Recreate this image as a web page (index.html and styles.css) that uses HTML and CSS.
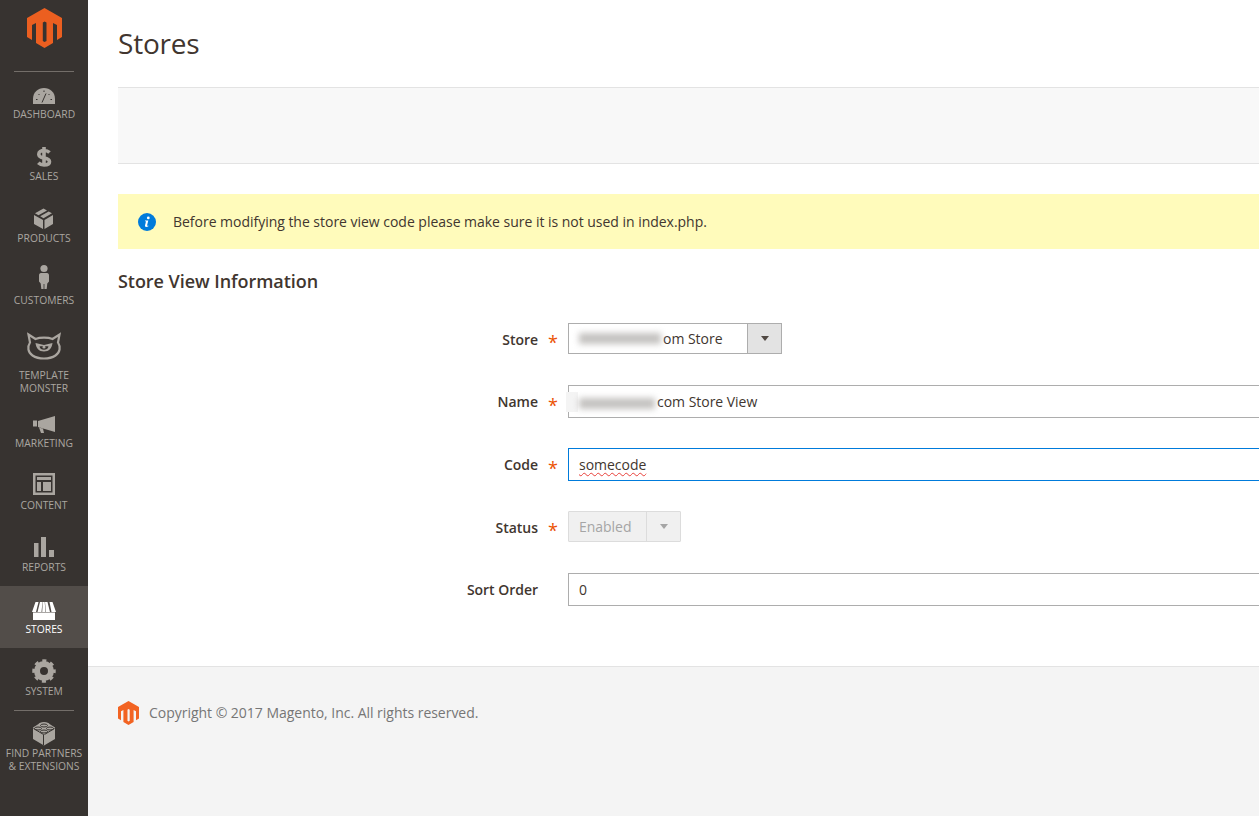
FILE: index.html
```html
<!DOCTYPE html>
<html lang="en">
<head>
<meta charset="utf-8">
<title>Stores</title>
<link rel="stylesheet" href="styles.css">
</head>
<body>
<div class="app">
  <nav class="side">
    <div class="side-logo">
      <svg class="logo-big" viewBox="27 8 35 40"><path fill-rule="evenodd" d="M44.5 8L62 18V37L57 40V25L53 23V43L44.5 48L36 43V23L32 25V40L27 37V18ZM42.800 22.500V41L44.500 42L46.500 41V22.500L44.600 21.500Z"/></svg>
    </div>
    <div class="side-rule"></div>
    <ul class="side-list">
      <li class="side-item">
        <svg class="ico" viewBox="0 0 36 26"><path d="M7 22V17C7 10 12 6 18 6C24 6 29 10 29 17V22Z"/><path class="cut" d="M16 20.5L20 11.5M10 17.5h1.500M12.500 12l1 1M18 8.500v1.500M23.500 12l-1 1M24.500 17.500h1.500"/></svg>
        <span class="side-label">Dashboard</span>
      </li>
      <li class="side-item">
        <svg class="ico" viewBox="0 0 36 26"><path class="line" d="M18 3V22M23.5 8.5C22 7 20 6.5 18 6.5C15 6.5 12.8 8 12.8 10.2C12.8 13 15.5 13.5 18 14C20.8 14.5 23.5 15.2 23.5 17.8C23.5 20 21 21 18 21C15.8 21 13.8 20.3 12.3 18.8"/></svg>
        <span class="side-label">Sales</span>
      </li>
      <li class="side-item">
        <svg class="ico" viewBox="0 0 36 26"><path d="M8 9L17 14V23L8 18ZM18.5 14L27 9V18L18.5 23ZM17.5 2.5L21 4.5L12.5 9.3L9 7.3ZM22.7 5.4L26 7.3L17.5 12.2L14.2 10.3Z"/></svg>
        <span class="side-label">Products</span>
      </li>
      <li class="side-item">
        <svg class="ico" viewBox="0 0 36 26"><circle cx="18" cy="0.5" r="3.6"/><path d="M15 5H21C22.3 5 23 6 23 7.5L23 13.5L21.3 15.5L20.7 21H18.4V16H17.6V21H15.3L14.7 15.5L13 13.5L13 7.5C13 6 13.7 5 15 5Z"/></svg>
        <span class="side-label">Customers</span>
      </li>
      <li class="side-item side-item-tall">
        <svg class="ico ico-tall" viewBox="0 0 36 39"><path class="outline" d="M2.500 4.500L9.500 9C14 7.200 22 7.200 26.500 9L33.500 4.500L32 12.500C35 17 34 22.500 29.500 25.500C26 27.800 22 28.500 18 28.500S10 27.800 6.500 25.500C2 22.500 1 17 4 12.500Z"/><path d="M9.500 13L18 15L26.500 13C26 18 23 21.500 18 21.500S10 18 9.500 13Z"/><path class="cut-fill" d="M13.500 16.500C15 15.800 21 15.800 22.500 16.500C22 18.800 20.300 19.800 18 19.800S14 18.800 13.500 16.500Z"/><circle cx="18" cy="17" r="1.600"/></svg>
        <span class="side-label">Template<br>Monster</span>
      </li>
      <li class="side-item">
        <svg class="ico" viewBox="0 0 36 26"><path d="M29 5V21L12 16V10ZM7 9.500H11V15.500H7ZM13 16.500L17 17.800L18 22H15Z"/></svg>
        <span class="side-label">Marketing</span>
      </li>
      <li class="side-item">
        <svg class="ico" viewBox="0 0 36 26"><path fill-rule="evenodd" d="M7 0H29V22H7ZM9.500 2.500V19.500H26.500V2.500ZM11 4H25V7H11ZM11 9H15V18H11ZM17 9H25V18H17Z"/></svg>
        <span class="side-label">Content</span>
      </li>
      <li class="side-item">
        <svg class="ico" viewBox="0 0 36 26"><path d="M8 8H12.500V22H8ZM15 2H20V22H15ZM23 15H28V22H23Z"/></svg>
        <span class="side-label">Reports</span>
      </li>
      <li class="side-item side-item-on">
        <svg class="ico" viewBox="0 0 36 26"><path d="M9.500 5H12.500L10 15H6ZM14 5H16.500L15.500 15H11.500ZM19 5H21.500L24 15H20ZM23.500 5H26.500L30 15H25.500ZM16.800 5H18.700L19.500 15H16.200ZM7 15.500H29V23H7Z"/></svg>
        <span class="side-label">Stores</span>
      </li>
      <li class="side-item">
        <svg class="ico" viewBox="0 0 36 26"><circle class="gear-ring" cx="18" cy="12" r="7"/><circle class="gear-teeth" cx="18" cy="12" r="10" stroke-dashoffset="2"/></svg>
        <span class="side-label">System</span>
      </li>
    </ul>
    <div class="side-rule"></div>
    <div class="side-item side-item-last">
      <svg class="ico ico-last" viewBox="0 0 36 25"><path d="M18 0C21 0 23 1 23.500 2L29 5.500V17L18 23.500L7 17V5.500L12.500 2C13 1 15 0 18 0Z"/><path class="cut" d="M7.500 6.500L17.500 12.500V23M28.500 6.500L18.500 12.500"/><ellipse class="cut" cx="18" cy="3.500" rx="3.500" ry="1.500"/><ellipse class="cut" cx="12" cy="6.500" rx="3.500" ry="1.500"/><ellipse class="cut" cx="24" cy="6.500" rx="3.500" ry="1.500"/><ellipse class="cut" cx="18" cy="9.500" rx="3.500" ry="1.500"/></svg>
      <span class="side-label">Find Partners<br>&amp; Extensions</span>
    </div>
  </nav>

  <div class="main">
    <header class="page-head"><h1 class="page-title">Stores</h1></header>
    <div class="actions-bar"></div>
    <div class="notice">
      <svg class="notice-ico" viewBox="0 0 18 18"><circle cx="9" cy="9" r="9" fill="#007bdb"/><circle cx="10.300" cy="4.900" r="1.400" fill="#fff"/><path d="M7 7.600H10.300L9.100 12.300C9 12.800 9.300 13 10.300 12.500L10.400 13.200C9 14.100 6.700 14.500 7 12.600L7.900 8.700C8 8.200 7.600 8.200 6.900 8.300Z" fill="#fff"/></svg>
      <span>Before modifying the store view code please make sure it is not used in index.php.</span>
    </div>
    <h2 class="section-title">Store View Information</h2>
    <form class="form">
      <div class="row row-select">
        <label class="row-label">Store</label><span class="star">*</span>
        <div class="select">
          <div class="select-text"><span class="smudge smudge-store"></span>om Store</div>
          <div class="select-btn"><i class="arrow"></i></div>
        </div>
      </div>
      <div class="row">
        <label class="row-label">Name</label><span class="star">*</span>
        <div class="field">
          <span class="patch"></span>
          <span class="smudge smudge-name"></span>com Store View
        </div>
      </div>
      <div class="row">
        <label class="row-label">Code</label><span class="star">*</span>
        <div class="field field-focus"><span class="spell">somecode</span></div>
      </div>
      <div class="row row-select">
        <label class="row-label">Status</label><span class="star">*</span>
        <div class="select select-off">
          <div class="select-text">Enabled</div>
          <div class="select-btn"><i class="arrow"></i></div>
        </div>
      </div>
      <div class="row">
        <label class="row-label">Sort Order</label><span class="star star-none"></span>
        <div class="field">0</div>
      </div>
    </form>
    <footer class="foot">
      <svg class="logo-small" viewBox="27 8 35 40"><path fill-rule="evenodd" d="M44.5 8L62 18V37L57 40V25L53 23V43L44.5 48L36 43V23L32 25V40L27 37V18ZM42.800 22.500V41L44.500 42L46.500 41V22.500L44.600 21.500Z"/></svg>
      <span>Copyright © 2017 Magento, Inc. All rights reserved.</span>
    </footer>
  </div>
</div>
</body>
</html>
```

FILE: styles.css
```css
* { box-sizing: border-box; }
html, body { margin: 0; height: 100%; overflow: hidden; }
body { font-family: "Open Sans", "Liberation Sans", sans-serif; font-size: 14px; letter-spacing: -0.025px; color: #41362f; background: #fff; }

.app { display: flex; width: 1259px; height: 816px; overflow: hidden; }

/* sidebar */
.side { flex: 0 0 88px; width: 88px; background: #373330; color: #aaa6a0; display: flex; flex-direction: column; }
.side-logo { height: 71px; display: flex; justify-content: center; padding-top: 8px; }
.logo-big { width: 35px; height: 40px; fill: #eb5f20; }
.side-rule { height: 1px; margin: 0 14px; background: #736e69; flex: none; }
.side-list { list-style: none; margin: -1px 0 0; padding: 0; }
.side-item { height: 62px; padding-top: 11px; display: flex; flex-direction: column; align-items: center; }
.side-item-tall { height: 81px; }
.side-item-last { height: auto; padding-top: 11px; }
.side-item-on { background: #524d49; color: #fff; }
.ico { width: 36px; height: 26px; flex: none; overflow: visible; fill: currentColor; }
.ico-tall { height: 39px; }
.ico-last { height: 25px; }
.ico .cut { fill: none; stroke: #373330; stroke-width: 1; }
.ico .cut-fill { fill: #373330; }
.ico .line { fill: none; stroke: currentColor; stroke-width: 3.6; }
.ico .outline { fill: none; stroke: currentColor; stroke-width: 2.2; }
.gear-ring { fill: none; stroke: currentColor; stroke-width: 6; }
.gear-teeth { fill: none; stroke: currentColor; stroke-width: 3.500; stroke-dasharray: 3.930 3.930; }
.side-label { font-size: 10.300px; letter-spacing: 0; line-height: 13px; text-transform: uppercase; text-align: center; white-space: nowrap; }

/* page */
.main { flex: 1 1 auto; min-width: 0; overflow: hidden; display: flex; flex-direction: column; background: #fff; }
.page-head { height: 87px; padding: 0 0 2px 30px; display: flex; align-items: center; }
.page-title { margin: 0; font-size: 28px; font-weight: 400; letter-spacing: -0.2px; line-height: 1; }
.actions-bar { height: 77px; background: #f8f8f8; border-top: 1px solid #e3e3e3; border-bottom: 1px solid #e3e3e3; margin-left: 30px; flex: none; }
.notice { margin: 30px 0 0 30px; height: 55px; flex: none; background: #fffbbb; display: flex; align-items: center; padding-left: 19.500px; gap: 17.500px; }
.notice-ico { width: 18px; height: 18px; flex: none; }
.section-title { margin: 0 0 0 30px; height: 74px; line-height: 64px; font-size: 18px; font-weight: 600; letter-spacing: -0.05px; flex: none; }

/* form */
.form { display: flex; flex-direction: column; gap: 30px; margin-left: 30px; flex: none; }
.row { display: grid; grid-template-columns: 420px 30px 800px; align-items: center; }
.row-select { margin-bottom: 1px; }
.row-select .row-label { padding-top: 2px; height: 22px; }
.row-label { text-align: right; font-weight: 600; line-height: 20px; }
.star { color: #eb5202; text-align: center; font-size: 18px; line-height: 20px; height: 20px; padding-top: 3px; }
.select { display: flex; width: 214px; height: 31px; border: 1px solid #adadad; background: #fff; }
.select-text { flex: 1; padding-left: 10px; line-height: 29px; display: flex; align-items: center; }
.select-btn { width: 34px; background: #e3e3e3; border-left: 1px solid #adadad; display: flex; align-items: center; justify-content: center; }
.arrow { width: 0; height: 0; border: 4px solid transparent; border-top: 5px solid #514943; border-bottom: 0; }
.select-off { width: 113px; border-color: #dcdcdc; background: #f0f0f0; color: #a5a5a5; border-radius: 1px; }
.select-off .select-btn { background: #f0f0f0; border-left-color: #dcdcdc; }
.select-off .arrow { border-top-color: #a5a5a5; }
.field { position: relative; height: 33px; border: 1px solid #adadad; padding-left: 10px; line-height: 31px; background: #fff; white-space: nowrap; display: block; }
.field-focus { border-color: #007bdb; }
.spell { text-decoration: underline wavy #e8403a 1px; text-underline-offset: 2px; }
.smudge { display: inline-block; height: 11px; background: #c4c2c0; filter: blur(3px); vertical-align: -2px; }
.smudge-store { width: 82px; margin-right: 2px; }
.smudge-name { width: 76px; margin-right: 2px; }
.patch { position: absolute; left: -3px; top: 6px; width: 12px; height: 20px; background: #f4f4f4; }

/* footer */
.foot { flex: 1; margin-top: 60px; background: #f4f4f4; border-top: 1px solid #e3e3e3; padding: 34px 0 0 30px; display: flex; align-items: flex-start; gap: 10px; color: #767676; line-height: 24px; }
.logo-small { width: 21px; height: 24px; fill: #f26322; flex: none; }
```
